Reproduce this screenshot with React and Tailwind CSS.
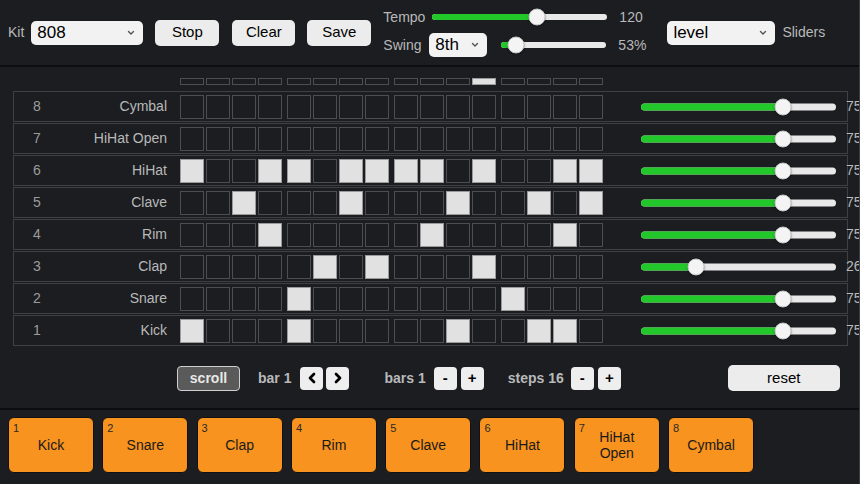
import { ChevronLeft, ChevronRight } from 'lucide-react'

const TRACKS = [
  { n: 8, name: 'Cymbal', on: [], level: 75 },
  { n: 7, name: 'HiHat Open', on: [], level: 75 },
  { n: 6, name: 'HiHat', on: [0, 3, 4, 6, 7, 8, 9, 11, 14, 15], level: 75 },
  { n: 5, name: 'Clave', on: [2, 6, 10, 13, 15], level: 75 },
  { n: 4, name: 'Rim', on: [3, 9, 14], level: 75 },
  { n: 3, name: 'Clap', on: [5, 7, 11], level: 26 },
  { n: 2, name: 'Snare', on: [4, 12], level: 75 },
  { n: 1, name: 'Kick', on: [0, 4, 10, 13, 14], level: 75 },
]

const PADS = ['Kick', 'Snare', 'Clap', 'Rim', 'Clave', 'HiHat', 'HiHat Open', 'Cymbal']
const GROUPS = [0, 1, 2, 3]
const CURRENT = 11

function Chevron() {
  return (
    <svg width="8" height="6" viewBox="0 0 8 6" className="shrink-0">
      <path d="M1.5 1.5 L4 4 L6.5 1.5" fill="none" stroke="#555" strokeWidth="1.4" strokeLinecap="round" />
    </svg>
  )
}

function Select({ value, className }) {
  return (
    <div className={`flex items-center justify-between bg-[#f2f2f2] rounded-[5px] pl-[6px] pr-[8px] text-[17px] text-black shrink-0 ${className}`}>
      <span>{value}</span>
      <Chevron />
    </div>
  )
}

function Btn({ children, className = '' }) {
  return (
    <div className={`flex items-center justify-center bg-[#ececec] rounded-[5px] text-[15px] text-black shrink-0 ${className}`}>
      {children}
    </div>
  )
}

// custom range look: green fill, light rest, white knob
function Slider({ width, pct, track = 7, knob = 17 }) {
  const left = knob / 2 + pct * (width - knob)
  return (
    <div className="relative h-[18px] shrink-0" style={{ width }}>
      <div className="absolute left-0 right-0 top-1/2 -translate-y-1/2 rounded-full bg-[#e8e8e8]" style={{ height: track }} />
      <div className="absolute left-0 top-1/2 -translate-y-1/2 rounded-full bg-[#22c72a]" style={{ height: track, width: left }} />
      <div
        className="absolute top-1/2 -translate-y-1/2 -translate-x-1/2 rounded-full bg-[#f4f4f4] border border-[#c8c8c8] shadow-[0_1px_2px_rgba(0,0,0,0.4)]"
        style={{ left, width: knob, height: knob }}
      />
    </div>
  )
}

function StepCells({ on, tall = true }) {
  return (
    <div className="flex gap-[5px] shrink-0">
      {GROUPS.map(g => (
        <div key={g} className="flex gap-[2px]">
          {[0, 1, 2, 3].map(i => {
            const idx = g * 4 + i
            const active = on.includes(idx)
            return (
              <div
                key={i}
                className={`w-[24px] shrink-0 ${tall ? 'h-[24px] border-[1.5px]' : 'h-[7px] border'} ${active ? 'bg-[#e1e1e1] border-[#9a9a9a]' : 'bg-transparent border-[#4c4e52]'}`}
              />
            )
          })}
        </div>
      ))}
    </div>
  )
}

function SmallBtn({ children }) {
  return (
    <div className="w-[23px] h-[23px] flex items-center justify-center bg-[#eeeeee] rounded-[4px] text-black text-[15px] font-bold">
      {children}
    </div>
  )
}

export default function App() {
  return (
    <div className="w-[860px] h-[484px] overflow-hidden bg-[#1b1d21] border-r border-[#3a3c41] font-['Liberation_Sans',Arial,sans-serif] text-[#b9b9b9]">
      {/* top bar */}
      <div className="h-[67px] flex items-center pl-[8px] border-b-2 border-[#0c0d0f]">
        <span className="text-[14px]">Kit</span>
        <Select value="808" className="ml-[7px] w-[112px] h-[24px]" />
        <Btn className="ml-[12px] w-[64px] h-[26px]">Stop</Btn>
        <Btn className="ml-[13px] w-[63px] h-[26px]">Clear</Btn>
        <Btn className="ml-[12px] w-[64px] h-[26px]">Save</Btn>
        <div className="ml-[12px] flex flex-col gap-[5px] mb-[2px]">
          <div className="flex items-center h-[22px] text-[14px]">
            <span className="w-[49px]">Tempo</span>
            <Slider width={175} pct={0.61} track={6} knob={17} />
            <span className="ml-[12px]">120</span>
          </div>
          <div className="flex items-center h-[24px] text-[14px]">
            <span className="w-[46px]">Swing</span>
            <Select value="8th" className="w-[58px] h-[24px]" />
            <div className="ml-[14px]">
              <Slider width={105} pct={0.075} track={6} knob={17} />
            </div>
            <span className="ml-[12px]">53%</span>
          </div>
        </div>
        <Select value="level" className="ml-[21px] w-[108px] h-[24px]" />
        <span className="ml-[7px] text-[14px]">Sliders</span>
      </div>

      {/* sequencer */}
      <div className="pt-[11px] pl-[13px]">
        <div className="pl-[167px] h-[8px]">
          <StepCells on={[CURRENT]} tall={false} />
        </div>
        <div className="mt-[5px] flex flex-col gap-[1px]">
          {TRACKS.map(t => (
            <div key={t.n} className="w-[835px] h-[31px] border border-[#3e4044] flex items-center text-[14px]">
              <span className="w-[46px] shrink-0 text-center text-[#9c9c9c]">{t.n}</span>
              <span className="w-[107px] shrink-0 text-right whitespace-nowrap">{t.name}</span>
              <div className="ml-[13px] shrink-0">
                <StepCells on={t.on} />
              </div>
              <div className="ml-[38px] shrink-0">
                <Slider width={195} pct={t.level / 100} />
              </div>
              <span className="ml-[10px] shrink-0">{t.level}</span>
            </div>
          ))}
        </div>
      </div>

      {/* transport controls */}
      <div className="mt-[19px] h-[26px] flex items-center text-[14px] font-bold">
        <div className="ml-[177px] w-[63px] h-[25px] flex items-center justify-center bg-[#5a5a5a] border-[1.5px] border-[#cfcfcf] rounded-[4px] text-[#e8e8e8]">
          scroll
        </div>
        <span className="ml-[18px]">bar 1</span>
        <div className="ml-[9px] flex gap-[3px]">
          <SmallBtn><ChevronLeft size={16} strokeWidth={4} /></SmallBtn>
          <SmallBtn><ChevronRight size={16} strokeWidth={4} /></SmallBtn>
        </div>
        <span className="ml-[35px]">bars 1</span>
        <div className="ml-[8px] flex gap-[4px]">
          <SmallBtn>-</SmallBtn>
          <SmallBtn>+</SmallBtn>
        </div>
        <span className="ml-[24px]">steps 16</span>
        <div className="ml-[7px] flex gap-[4px]">
          <SmallBtn>-</SmallBtn>
          <SmallBtn>+</SmallBtn>
        </div>
        <Btn className="ml-[107px] w-[112px] h-[26px] text-[14px] font-normal">reset</Btn>
      </div>

      {/* pads */}
      <div className="mt-[17px] border-t-2 border-[#0c0d0f] pt-[7px] pl-[8px] flex gap-[8.3px]">
        {PADS.map((p, i) => (
          <div
            key={p}
            className="relative w-[86px] h-[56px] rounded-[6px] bg-[#f7931e] border border-[#111] flex items-center justify-center text-center text-[14px] leading-[16px] text-[#1a1a1a]"
          >
            <span className="absolute left-[4px] top-[2px] text-[11px] text-[#2a2a2a]">{i + 1}</span>
            <span className="w-[60px]">{p}</span>
          </div>
        ))}
      </div>
    </div>
  )
}
